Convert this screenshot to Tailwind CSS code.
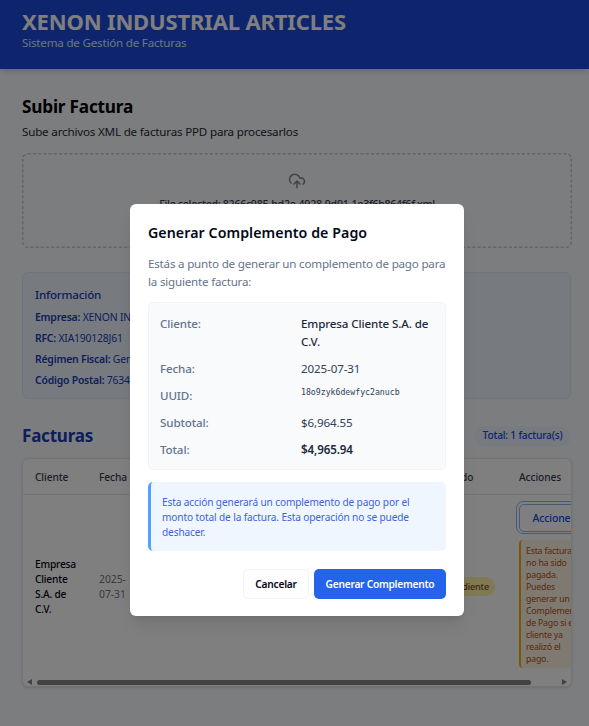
<!DOCTYPE html>
<html lang="es">
<head>
<meta charset="utf-8">
<title>Xenon Industrial Articles</title>
<script src="https://cdn.jsdelivr.net/npm/@tailwindcss/browser@4"></script>
</head>
<body class="relative h-[726px] w-[589px] overflow-hidden bg-[#f8fafc] font-['Noto_Sans','Open_Sans',sans-serif] text-[11.6px] tracking-[-0.2px] text-[#020817]">
<header class="h-[69px] bg-[#1c4bdc] px-[22px] pt-[9px] shadow-md">
  <h1 class="h-6 whitespace-nowrap text-[22px] leading-6 tracking-[-0.16px] font-bold text-white">XENON INDUSTRIAL ARTICLES</h1>
  <p class="mt-px h-[18px] whitespace-nowrap leading-[18px] text-blue-100">Sistema de Gestión de Facturas</p>
</header>
<main class="px-[22px] pt-[26px]">
  <h2 class="h-6 whitespace-nowrap text-[17.2px] leading-6 font-bold text-black">Subir Factura</h2>
  <p class="mt-1 h-[18px] whitespace-nowrap leading-[18px] tracking-[-0.18px] text-gray-800">Sube archivos XML de facturas PPD para procesarlos</p>
  <div class="relative mt-3 flex h-[95px] w-[550px] flex-col items-center">
    <svg class="absolute inset-0" width="550" height="95" fill="none" stroke="#c8cbd0" stroke-width="1.5"><rect x=".75" y=".75" width="548.5" height="93.5" rx="5" stroke-dasharray="3.2 2"/></svg>
    <svg class="mt-[19px]" width="18" height="18" viewBox="0 0 24 24" fill="none" stroke="#82868f" stroke-width="2" stroke-linecap="round" stroke-linejoin="round"><path d="M4 14.9A7 7 0 1 1 15.71 8h1.79a4.5 4.5 0 0 1 2.5 8.24M12 21v-9M8 16l4-4 4 4"/></svg>
    <p class="mt-[5px] h-[18px] text-[10.6px] tracking-[-0.28px] whitespace-nowrap leading-[18px] font-medium text-gray-700">File selected: 8266c985-bd2e-4928-9d91-1e3f6b864f6f.xml</p>
  </div>
  <section class="mt-6 h-[127px] w-[549px] rounded-md border border-blue-100 bg-blue-50 px-3 pt-[13px] text-[10.4px] text-blue-800">
    <h3 class="h-[18px] text-[11.6px] leading-[18px] font-medium">Información</h3>
    <div class="mt-[3px] whitespace-nowrap leading-[21px]">
      <p><b class="font-semibold">Empresa:</b> XENON INDUSTRIAL</p>
      <p><b class="font-semibold">RFC:</b> XIA190128J61</p>
      <p><b class="font-semibold">Régimen Fiscal:</b> General</p>
      <p><b class="font-semibold">Código Postal:</b> 76343</p>
    </div>
  </section>
  <div class="mt-[26px] flex h-[22px] w-[549px] items-center justify-between">
    <h2 class="text-[17px] leading-6 font-bold text-blue-800">Facturas</h2>
    <span class="flex h-[21px] w-[97px] items-center justify-center rounded-full bg-blue-50 text-[10.2px] tracking-[-0.2px] font-medium whitespace-nowrap text-blue-700">Total: 1 factura(s)</span>
  </div>
  <section class="mt-[11px] flex h-[229px] w-[550px] flex-col overflow-hidden rounded-md border border-gray-200 bg-white text-[10.2px] shadow-sm">
    <div class="flex h-9 shrink-0 items-center border-b border-gray-200 pt-[2px] pl-3 tracking-[-0.1px] font-medium text-gray-700">
      <span class="w-16 shrink-0">Cliente</span><span class="w-[342px] shrink-0">Fecha</span>
      <span class="w-[78px] shrink-0">Estado</span><span>Acciones</span>
    </div>
    <div class="flex h-[183px] shrink-0 items-center pl-3 leading-[15px]">
      <p class="w-16 shrink-0 font-medium">Empresa<br>Cliente<br>S.A. de<br>C.V.</p>
      <p class="w-[323px] shrink-0 text-[10.3px] tracking-normal text-gray-500">2025-<br>07-31</p>
      <div class="flex w-[94px] shrink-0 pl-1.5"><span class="flex h-[19px] w-[67px] items-center justify-end rounded-full bg-[#fef3a8] pr-[6px] text-[9.2px] font-medium text-[#854d0e]">Pendiente</span></div>
      <div class="h-full w-[110px] shrink-0 pt-[6px]">
        <div class="h-[33px] rounded-[7px] border-[1.5px] border-[#8db5f5] p-[1.5px]"><div class="flex h-full items-center rounded-[5px] border border-[#8db5f5] pt-px pl-[13px] text-[10.4px] tracking-[-0.1px] font-medium text-blue-700">Acciones</div></div>
        <p class="mt-[6px] ml-[3px] h-[128px] rounded-l border-l-2 border-[#f0b000] bg-[#fdf5e2] pt-[5px] pl-[5px] text-[8.8px] tracking-[-0.22px] leading-[12px] whitespace-nowrap text-[#b45020]">Esta factura<br>no ha sido<br>pagada.<br>Puedes<br>generar un<br>Complemento<br>de Pago si el<br>cliente ya<br>realizó el<br>pago.</p>
      </div>
    </div>
    <div class="flex h-2 shrink-0 items-center pl-1">
      <svg width="5" height="6" viewBox="0 0 5 6" fill="#858585"><path d="M5 0v6L0 3z"/></svg>
      <div class="ml-[5px] h-[5px] w-[494px] rounded-full bg-[#858585]"></div>
      <svg class="ml-[31px]" width="5" height="6" viewBox="0 0 5 6" fill="#858585"><path d="M0 0v6l5-3z"/></svg>
    </div>
  </section>
</main>
<div class="absolute inset-0 bg-black/50"></div>
<div role="dialog" class="absolute top-[204px] left-[130px] h-[412px] w-[334px] rounded-md bg-white px-[18px] pt-[19px] shadow-lg">
  <h2 class="h-5 whitespace-nowrap text-[14.2px] leading-5 tracking-[0.07px] font-semibold">Generar Complemento de Pago</h2>
  <p class="mt-3 h-9 whitespace-nowrap leading-[18px] text-[#64748b]">Estás a punto de generar un complemento de pago para<br>la siguiente factura:</p>
  <div class="mt-[11px] grid h-[168px] w-[298px] grid-cols-[141px_1fr] grid-rows-[36px_18px_18px_18px_18px] gap-y-[9px] rounded-[5px] border border-slate-100 bg-slate-50 px-[11px] pt-3 whitespace-nowrap leading-[18px] tracking-[-0.12px] text-[#334155]">
    <b class="font-medium text-[#64748b]">Cliente:</b><span class="font-medium text-[#1e293b]">Empresa Cliente S.A. de<br>C.V.</span>
    <b class="font-medium text-[#64748b]">Fecha:</b><span>2025-07-31</span>
    <b class="font-medium text-[#64748b]">UUID:</b><span class="font-['DejaVu_Sans_Mono',monospace] text-[8.2px] leading-[11px] tracking-normal">18o9zyk6dewfyc2anucb</span>
    <b class="font-medium text-[#64748b]">Subtotal:</b><span>$6,964.55</span>
    <b class="font-medium text-[#64748b]">Total:</b><span class="font-semibold text-[#1e293b]">$4,965.94</span>
  </div>
  <p class="mt-3 h-[69px] w-[298px] rounded-[5px] border-l-[3px] border-[#51a2ff] bg-blue-50 pt-[13px] pl-[11px] whitespace-nowrap text-[10.1px] leading-[15px] tracking-[-0.12px] text-[#3d62dc]">Esta acción generará un complemento de pago por el<br>monto total de la factura. Esta operación no se puede<br>deshacer.</p>
  <div class="mt-[18px] flex h-[30px] w-[298px] justify-end gap-[5px] text-[10.2px] font-semibold whitespace-nowrap">
    <button class="w-[66px] rounded-[5px] border border-slate-100 pt-[2px]">Cancelar</button>
    <button class="w-[132px] rounded-[5px] bg-[#2563eb] pt-[2px] tracking-[-0.25px] text-white">Generar Complemento</button>
  </div>
</div>
</body>
</html>
